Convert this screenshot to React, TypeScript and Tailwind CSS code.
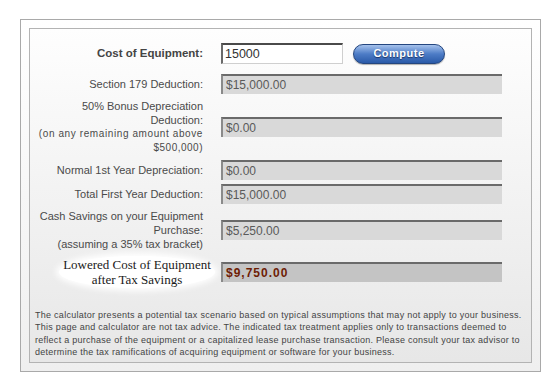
const sans = { fontFamily: '"Liberation Sans", Arial, sans-serif' }

function ReadField({ value }: { value: string }) {
  return (
    <div className="w-[281px] h-[20px] flex items-center pl-[3px] border-t-2 border-l-2 border-t-[#6a6a6a] border-l-[#8a8a8a] bg-[#d9d9d9] text-[12px] text-[#5a5a5a]">
      {value}
    </div>
  )
}

function Row({
  children,
  field,
  className = '',
}: {
  children: React.ReactNode
  field: React.ReactNode
  className?: string
}) {
  return (
    <div className={`flex items-center gap-[18px] ${className}`}>
      <div className="w-[173px] text-right text-[11px] leading-[14px] text-[#4a4a4a] whitespace-nowrap">{children}</div>
      {field}
    </div>
  )
}

export default function App() {
  return (
    <div className="w-[557px] h-[383px] bg-white pt-[19px] pl-[20px]" style={sans}>
      <div className="w-[521px] h-[353px] border border-[#a9a9a9] p-[8px] bg-gradient-to-b from-white to-[#efefef]">
        <div className="h-full border border-[#b3b3b3] bg-gradient-to-b from-[#fefefe] to-[#e7e7e7] pt-[13px]">
          <div className="flex items-center gap-[18px] h-[23px]">
            <div className="w-[173px] text-right text-[11.5px] font-bold text-[#444]">Cost of Equipment:</div>
            <div className="w-[122px] h-[21px] flex items-center pl-[2px] bg-white border-t-2 border-l-2 border-r border-b border-t-[#4a4a4a] border-l-[#6a6a6a] border-r-[#cfcfcf] border-b-[#cfcfcf] text-[12.5px] text-[#333]">
              15000
            </div>
            <button className="ml-[-8px] w-[92px] h-[20px] rounded-full border border-[#24467f] bg-gradient-to-b from-[#a6c2ec] via-[#4d7cc6] to-[#2a5aa8] text-white text-[11px] font-bold tracking-[0.5px] [text-shadow:0_1px_1px_#1d3566] shadow-[0_1px_1px_rgba(0,0,0,0.3)]">
              Compute
            </button>
          </div>

          <Row className="mt-[9px]" field={<ReadField value="$15,000.00" />}>
            Section 179 Deduction:
          </Row>

          <Row className="mt-[5px]" field={<ReadField value="$0.00" />}>
            <div>50% Bonus Depreciation</div>
            <div>Deduction:</div>
            <div className="text-[10px] tracking-[0.6px]">(on any remaining amount above</div>
            <div className="text-[10px] tracking-[0.5px]">$500,000)</div>
          </Row>

          <Row className="mt-[5px]" field={<ReadField value="$0.00" />}>
            Normal 1st Year Depreciation:
          </Row>

          <Row className="mt-[4px]" field={<ReadField value="$15,000.00" />}>
            Total First Year Deduction:
          </Row>

          <Row className="mt-[5px]" field={<ReadField value="$5,250.00" />}>
            <div>Cash Savings on your Equipment</div>
            <div>Purchase:</div>
            <div>(assuming a 35% tax bracket)</div>
          </Row>

          <div className="flex items-center gap-[18px] mt-[5px]">
            <div className="w-[173px] flex justify-end">
              <div
                className="mr-[-12px] w-[156px] text-center whitespace-nowrap text-[13px] leading-[15px] text-[#1a1a1a] bg-white rounded-[50%] py-[1px] shadow-[0_0_6px_3px_#ffffff]"
                style={{ fontFamily: '"Liberation Serif", "Times New Roman", serif' }}
              >
                Lowered Cost of Equipment
                <br />
                after Tax Savings
              </div>
            </div>
            <div className="w-[281px] h-[20px] flex items-center pl-[3px] border-t-2 border-l-2 border-t-[#6a6a6a] border-l-[#8a8a8a] bg-[#c4c4c4] text-[12px] font-bold tracking-[1px] text-[#6e1d04]">
              $9,750.00
            </div>
          </div>

          <div className="mt-[21px] pl-[5px] text-[9px] leading-[12.3px] tracking-[0.27px] text-[#444] whitespace-nowrap">
            <div>The calculator presents a potential tax scenario based on typical assumptions that may not apply to your business.</div>
            <div>This page and calculator are not tax advice. The indicated tax treatment applies only to transactions deemed to</div>
            <div>reflect a purchase of the equipment or a capitalized lease purchase transaction. Please consult your tax advisor to</div>
            <div>determine the tax ramifications of acquiring equipment or software for your business.</div>
          </div>
        </div>
      </div>
    </div>
  )
}
